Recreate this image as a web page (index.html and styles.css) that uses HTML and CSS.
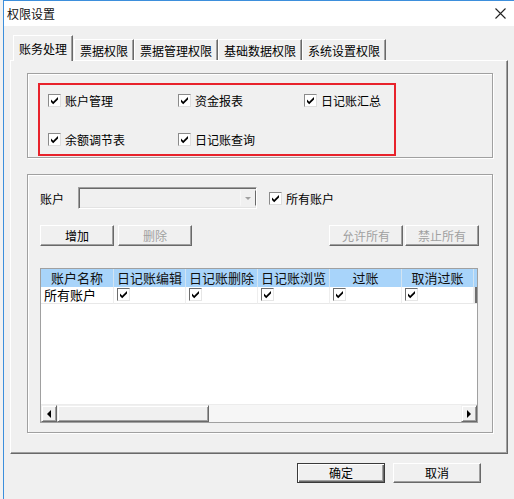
FILE: index.html
```html
<!DOCTYPE html>
<html lang="zh-CN">
<head>
    <meta charset="UTF-8">
    <title>权限设置</title>
    <link rel="stylesheet" href="styles.css">
</head>
<body>
    <div class="window">
        <div class="titlebar">
            <span class="title">权限设置</span>
            <svg class="close" width="11" height="11" viewBox="0 0 11 11"><path d="M0.5 0.5 L10.5 10.5 M10.5 0.5 L0.5 10.5"/></svg>
        </div>
        <div class="client">
            <div class="tabs">
                <div class="tab active">账务处理</div>
                <div class="tab">票据权限</div>
                <div class="tab">票据管理权限</div>
                <div class="tab">基础数据权限</div>
                <div class="tab">系统设置权限</div>
            </div>
            <div class="tab-page">
                <div class="group group-top">
                    <div class="highlight">
                        <div class="opt"><span class="chk"><svg viewBox="0 0 11 11"><polygon points="2,4.5 4.2,6.7 9,2 9,4.6 4.2,9.3 2,7.1"/></svg></span>账户管理</div>
                        <div class="opt"><span class="chk"><svg viewBox="0 0 11 11"><polygon points="2,4.5 4.2,6.7 9,2 9,4.6 4.2,9.3 2,7.1"/></svg></span>资金报表</div>
                        <div class="opt"><span class="chk"><svg viewBox="0 0 11 11"><polygon points="2,4.5 4.2,6.7 9,2 9,4.6 4.2,9.3 2,7.1"/></svg></span>日记账汇总</div>
                        <div class="opt"><span class="chk"><svg viewBox="0 0 11 11"><polygon points="2,4.5 4.2,6.7 9,2 9,4.6 4.2,9.3 2,7.1"/></svg></span>余额调节表</div>
                        <div class="opt"><span class="chk"><svg viewBox="0 0 11 11"><polygon points="2,4.5 4.2,6.7 9,2 9,4.6 4.2,9.3 2,7.1"/></svg></span>日记账查询</div>
                    </div>
                </div>
                <div class="group group-accounts">
                    <div class="acct-row">
                        <span class="acct-label">账户</span>
                        <div class="combo"><span class="combo-btn"><span class="arrow-down"></span></span></div>
                        <div class="opt all-acct"><span class="chk"><svg viewBox="0 0 11 11"><polygon points="2,4.5 4.2,6.7 9,2 9,4.6 4.2,9.3 2,7.1"/></svg></span>所有账户</div>
                    </div>
                    <div class="btn-row">
                        <button class="btn">增加</button>
                        <button class="btn" disabled>删除</button>
                        <span class="spacer"></span>
                        <button class="btn" disabled>允许所有</button>
                        <button class="btn" disabled>禁止所有</button>
                    </div>
                    <div class="grid">
                        <div class="grid-row grid-head">
                            <div class="cell c-name">账户名称</div>
                            <div class="cell">日记账编辑</div>
                            <div class="cell">日记账删除</div>
                            <div class="cell">日记账浏览</div>
                            <div class="cell">过账</div>
                            <div class="cell">取消过账</div>
                            <div class="cell c-cut"></div>
                        </div>
                        <div class="grid-row grid-data">
                            <div class="cell c-name">所有账户</div>
                            <div class="cell"><span class="chk"><svg viewBox="0 0 11 11"><polygon points="2,4.5 4.2,6.7 9,2 9,4.6 4.2,9.3 2,7.1"/></svg></span></div>
                            <div class="cell"><span class="chk"><svg viewBox="0 0 11 11"><polygon points="2,4.5 4.2,6.7 9,2 9,4.6 4.2,9.3 2,7.1"/></svg></span></div>
                            <div class="cell"><span class="chk"><svg viewBox="0 0 11 11"><polygon points="2,4.5 4.2,6.7 9,2 9,4.6 4.2,9.3 2,7.1"/></svg></span></div>
                            <div class="cell"><span class="chk"><svg viewBox="0 0 11 11"><polygon points="2,4.5 4.2,6.7 9,2 9,4.6 4.2,9.3 2,7.1"/></svg></span></div>
                            <div class="cell"><span class="chk"><svg viewBox="0 0 11 11"><polygon points="2,4.5 4.2,6.7 9,2 9,4.6 4.2,9.3 2,7.1"/></svg></span></div>
                            <div class="cell c-cut"></div>
                        </div>
                        <div class="grid-fill"></div>
                        <div class="hscroll">
                            <div class="sb-btn"><span class="arrow-left"></span></div>
                            <div class="sb-thumb"></div>
                            <div class="sb-track"></div>
                            <div class="sb-btn"><span class="arrow-right"></span></div>
                        </div>
                    </div>
                </div>
            </div>
            <div class="dialog-buttons">
                <button class="btn btn-wide default">确定</button>
                <button class="btn btn-wide">取消</button>
            </div>
        </div>
    </div>
</body>
</html>
```

FILE: styles.css
```css
* {
    box-sizing: border-box;
}
body {
    margin: 0;
    background: #f2f2f2;
    font-family: "Noto Sans CJK SC", "Microsoft YaHei", sans-serif;
    font-size: 12px;
    color: #000;
}
.window {
    margin-left: 3px;
    width: 511px;
    height: 499px;
    border-top: 1px solid #3d8fdc;
    border-left: 1px solid #3d8fdc;
    background: #f0f0f0;
}
.titlebar {
    height: 25px;
    background: #fff;
    display: flex;
    align-items: center;
    justify-content: space-between;
    padding: 0 8px 0 3px;
}
.title {
    line-height: 16px;
    color: #111;
}
.close path {
    stroke: #222;
    stroke-width: 1.1;
    fill: none;
}
.client {
    padding: 9px 0 0 6px;
}

/* tabs */
.tabs {
    display: flex;
    align-items: flex-end;
    height: 25px;
    padding-left: 3px;
    position: relative;
    z-index: 1;
}
.tab {
    height: 21px;
    padding: 1px 5px 0;
    border: 1px solid;
    border-color: #fff #696969 transparent #fff;
    border-bottom: none;
    box-shadow: inset -1px 0 #a0a0a0;
    line-height: 19px;
    white-space: nowrap;
    background: #f0f0f0;
}
.tab.active {
    height: 26px;
    margin-bottom: -1px;
    padding-top: 3px;
    margin-right: 1px;
}
.tab-page {
    width: 498px;
    height: 394px;
    border: 1px solid;
    border-color: #fff #696969 #696969 #fff;
    box-shadow: inset -1px -1px #a0a0a0;
    padding: 12px 0 0 16px;
}

/* group boxes */
.group {
    width: 466px;
    border: 1px solid #a0a0a0;
    box-shadow: inset 1px 1px #fff, 1px 1px #fff;
}
.group-top {
    height: 85px;
}
.group-accounts {
    height: 259px;
    margin-top: 16px;
}
.highlight {
    margin: 9px 0 0 10px;
    width: 358px;
    height: 73px;
    border: 2px solid #e8222b;
    padding: 9px 0 0 8px;
    display: grid;
    grid-template-columns: 130px 126px auto;
    grid-template-rows: 13px 13px;
    row-gap: 26px;
}
.opt {
    display: flex;
    align-items: center;
    gap: 4px;
    line-height: 13px;
    white-space: nowrap;
}
.chk {
    width: 13px;
    height: 13px;
    background: #fff;
    border: 1px solid;
    border-color: #8a8a8a #dedede #dedede #8a8a8a;
    display: inline-block;
    flex: none;
}
.chk svg {
    display: block;
    width: 11px;
    height: 11px;
    fill: #000;
}

/* account row */
.acct-row {
    display: flex;
    align-items: center;
    margin: 12px 0 0 12px;
    height: 22px;
}
.acct-label {
    width: 38px;
}
.combo {
    width: 179px;
    height: 22px;
    border: 1px solid;
    border-color: #a0a0a0 #fff #fff #a0a0a0;
    box-shadow: inset 1px 1px #696969, inset -1px -1px #e3e3e3;
    background: #f0f0f0;
    display: flex;
    justify-content: flex-end;
    padding: 2px 0 2px 2px;
}
.combo-btn {
    width: 16px;
    border: 1px solid;
    border-color: #f0f0f0 #696969 #f0f0f0 #f7f7f7;
    display: flex;
    align-items: center;
    justify-content: center;
}
.arrow-down {
    border-top: 3px solid #a0a0a0;
    border-left: 3px solid transparent;
    border-right: 3px solid transparent;
}
.all-acct {
    margin-left: 12px;
}

/* buttons */
.btn-row {
    display: flex;
    margin: 16px 13px 0 12px;
    height: 21px;
    gap: 4px;
}
.spacer {
    flex: 1;
}
.btn-row .btn + .btn[disabled] + .spacer + .btn + .btn {
    margin-left: -2px;
}
.btn {
    width: 74px;
    height: 21px;
    padding: 0;
    font: inherit;
    line-height: 17px;
    color: #000;
    background: #f0f0f0;
    border: 1px solid;
    border-color: #fff #696969 #696969 #fff;
    box-shadow: inset -1px -1px #a0a0a0;
}
.btn[disabled] {
    color: #a0a0a0;
}
.btn-wide {
    width: 88px;
    height: 20px;
    line-height: 16px;
}
.btn.default {
    border-color: #3a3a3a;
    box-shadow: inset 1px 1px #fff, inset -1px -1px #696969, inset -2px -2px #a0a0a0;
}

/* grid */
.grid {
    margin: 22px 0 0 12px;
    width: 438px;
    height: 155px;
    border: 1px solid #a0a0a0;
    background: #fff;
    display: flex;
    flex-direction: column;
    font-size: 13px;
}
.grid-row {
    display: flex;
}
.cell {
    width: 72px;
    flex: none;
}
.cell.c-name {
    width: 73px;
}
.cell.c-cut {
    width: 3px;
}
.grid-head .cell {
    height: 18px;
    background: #a8d4fa;
    border-right: 1px solid #d2e4f2;
    text-align: center;
    line-height: 18px;
    color: #111;
    white-space: nowrap;
    overflow: hidden;
}
.grid-head .cell.c-cut {
    border-right: none;
}
.grid-data .cell {
    height: 17px;
    border-right: 1px solid #eeeeee;
    border-bottom: 1px solid #e8e8e8;
    padding: 1px 0 0 3px;
    line-height: 15px;
}
.grid-data .cell.c-name {
    padding-top: 0;
    line-height: 16px;
}
.grid-data .cell.c-cut {
    padding: 0;
    border-right: none;
    border-left: 1px solid #e8e8e8;
    background: #6e6e6e;
}
.grid-data .chk {
    height: 13px;
    border-color: #6e6e6e #e6e6e6 #e6e6e6 #6e6e6e;
}
.grid-fill {
    flex: 1;
    border-bottom: 1px solid #ececec;
}
.hscroll {
    display: flex;
    height: 17px;
}
.sb-btn,
.sb-thumb {
    background: #f0f0f0;
    border: 1px solid;
    border-color: #f0f0f0 #696969 #696969 #f0f0f0;
    box-shadow: inset 1px 1px #fff, inset -1px -1px #a0a0a0;
}
.sb-btn {
    width: 16px;
    display: flex;
    align-items: center;
    justify-content: center;
}
.sb-thumb {
    width: 152px;
}
.sb-track {
    flex: 1;
    background: #f6f6f6;
}
.arrow-left {
    border-right: 4px solid #000;
    border-top: 4px solid transparent;
    border-bottom: 4px solid transparent;
}
.arrow-right {
    border-left: 4px solid #000;
    border-top: 4px solid transparent;
    border-bottom: 4px solid transparent;
}

/* dialog buttons */
.dialog-buttons {
    display: flex;
    justify-content: flex-end;
    gap: 8px;
    padding-right: 33px;
    margin-top: 9px;
}
```
